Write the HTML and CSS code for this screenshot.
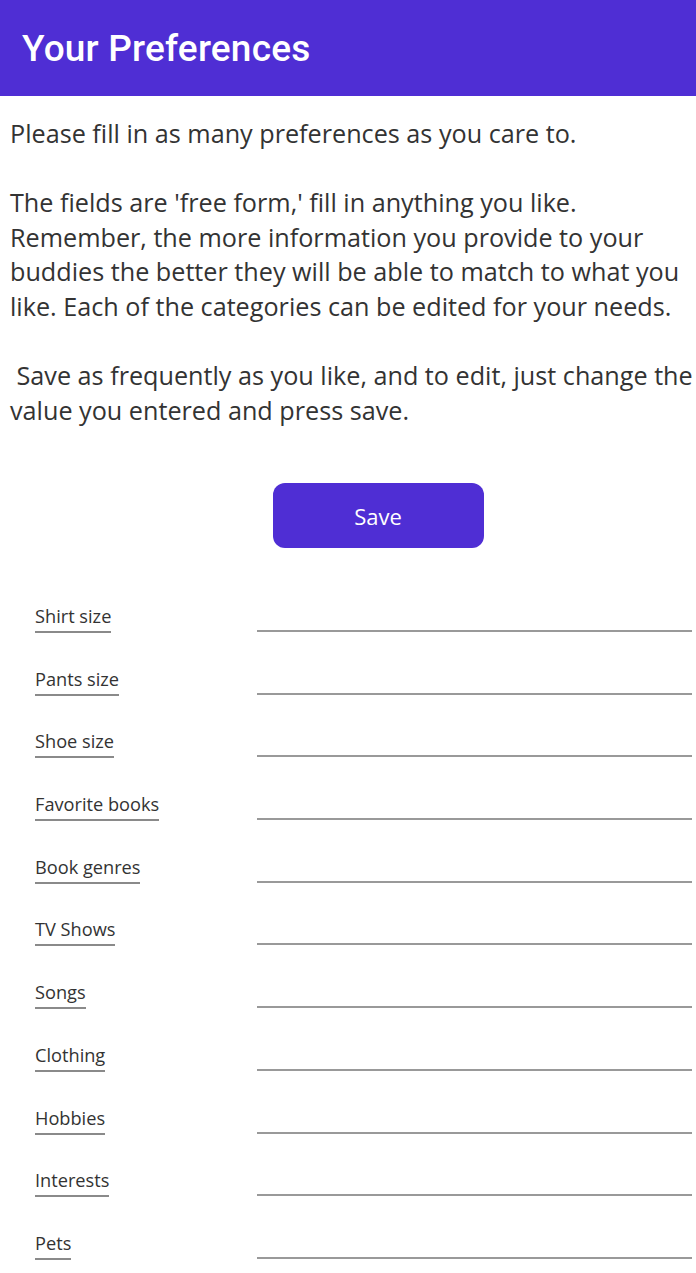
FILE: index.html
```html
<!DOCTYPE html>
<html>
<head>
<meta charset="utf-8">
<link rel="stylesheet" href="styles.css">
</head>
<body>
<header class="topbar"><h1 class="title">Your Preferences</h1></header>
<main class="content">
  <div class="intro">
    <p>Please fill in as many preferences as you care to.</p>
    <p>The fields are 'free form,' fill in anything you like. Remember, the more information you provide to your buddies the better they will be able to match to what you like. Each of the categories can be edited for your needs.</p>
    <p>&nbsp;Save as frequently as you like, and to edit, just change the value you entered and press save.</p>
  </div>
  <div class="actions"><button class="save">Save</button></div>
  <div class="fields">
    <div class="row"><span class="label">Shirt size</span><span class="input"></span></div>
    <div class="row"><span class="label">Pants size</span><span class="input"></span></div>
    <div class="row"><span class="label">Shoe size</span><span class="input"></span></div>
    <div class="row"><span class="label">Favorite books</span><span class="input"></span></div>
    <div class="row"><span class="label">Book genres</span><span class="input"></span></div>
    <div class="row"><span class="label">TV Shows</span><span class="input"></span></div>
    <div class="row"><span class="label">Songs</span><span class="input"></span></div>
    <div class="row"><span class="label">Clothing</span><span class="input"></span></div>
    <div class="row"><span class="label">Hobbies</span><span class="input"></span></div>
    <div class="row"><span class="label">Interests</span><span class="input"></span></div>
    <div class="row"><span class="label">Pets</span><span class="input"></span></div>
  </div>
</main>
</body>
</html>
```
FILE: styles.css
```css
html, body {
  margin: 0;
  padding: 0;
  background: #ffffff;
}
body {
  font-family: "Open Sans", "Liberation Sans", sans-serif;
  color: #333333;
  overflow: hidden;
}
.topbar {
  background: #4f2ed4;
  height: 96px;
  display: flex;
  align-items: center;
  padding-left: 22px;
  box-sizing: border-box;
}
.title {
  margin: 0;
  font-family: Roboto, "Liberation Sans", sans-serif;
  font-weight: 500;
  font-size: 37px;
  color: #ffffff;
  letter-spacing: 0.2px;
}
.intro {
  padding: 20px 0 0 10px;
  font-size: 25.2px;
  line-height: 34.6px;
}
.intro p {
  margin: 0 0 34.6px 0;
}
.intro p:last-child {
  margin-bottom: 0;
}
.actions {
  display: flex;
  justify-content: center;
  padding-top: 56px;
  padding-left: 60px;
}
.save {
  width: 211px;
  height: 65px;
  border: none;
  border-radius: 12px;
  background: #4f2ed4;
  color: #ffffff;
  font-family: "Open Sans", "Liberation Sans", sans-serif;
  font-size: 22px;
}
.fields {
  padding-top: 22px;
  padding-right: 4px;
}
.row {
  display: flex;
  align-items: flex-end;
  height: 62.7px;
  padding-left: 35px;
  box-sizing: border-box;
}
.label {
  flex: none;
  font-size: 18.2px;
  line-height: 26px;
  border-bottom: 2px solid #8a8a8a;
  padding-bottom: 2px;
}
.input {
  margin-left: auto;
  width: 435px;
  border-bottom: 2px solid #999999;
  margin-bottom: 1px;
}
```
